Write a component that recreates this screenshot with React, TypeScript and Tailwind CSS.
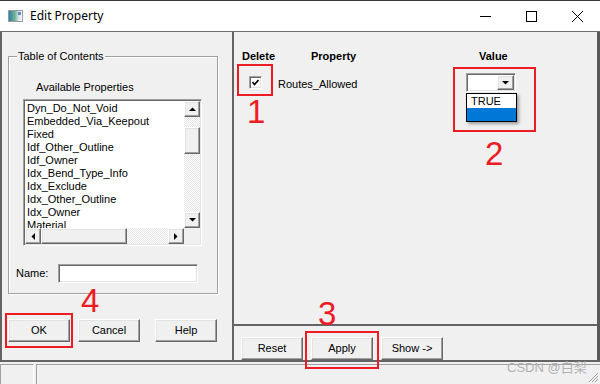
import React from "react";

const raised =
  "bg-[#f0f0f0] border border-t-white border-l-white border-r-[#696969] border-b-[#696969] shadow-[inset_-1px_-1px_0_#a0a0a0,inset_1px_1px_0_#e3e3e3]";
const sunken =
  "bg-white border border-t-[#a0a0a0] border-l-[#a0a0a0] border-r-white border-b-white shadow-[inset_1px_1px_0_#696969,inset_-1px_-1px_0_#e3e3e3]";
const btn =
  "h-[23px] w-[62px] flex items-center justify-center text-[11px] leading-none text-black " + raised;

const items = [
  "Dyn_Do_Not_Void",
  "Embedded_Via_Keepout",
  "Fixed",
  "Idf_Other_Outline",
  "Idf_Owner",
  "Idx_Bend_Type_Info",
  "Idx_Exclude",
  "Idx_Other_Outline",
  "Idx_Owner",
  "Material",
];

function Tri({ dir }: { dir: "up" | "down" | "left" | "right" }) {
  const pts =
    dir === "up"
      ? "0,4 7,4 3.5,0.5"
      : dir === "down"
      ? "0,0 7,0 3.5,3.5"
      : dir === "left"
      ? "4,0 4,7 0.5,3.5"
      : "0,0 0,7 3.5,3.5";
  const w = dir === "up" || dir === "down" ? 7 : 4;
  const h = dir === "up" || dir === "down" ? 4 : 7;
  return (
    <svg width={w} height={h} viewBox={`0 0 ${w} ${h}`}>
      <polygon points={pts} fill="#000" />
    </svg>
  );
}

const track =
  "bg-[repeating-conic-gradient(#e4e4e4_0_25%,#ffffff_0_50%)] bg-[length:2px_2px]";

export default function App() {
  return (
    <div className="relative w-[600px] h-[384px] overflow-hidden bg-[#f0f0f0] flex flex-col text-black font-['Liberation_Sans',Arial,sans-serif]">
      {/* Title bar */}
      <div className="h-[32px] shrink-0 bg-white border-t border-t-[#3a3a3a] border-b border-b-[#6e6e6e] flex items-center">
        <div className="ml-[8px] w-[15px] h-[12px] border border-[#9a9a9a] bg-[linear-gradient(90deg,#2f7fb5_0%,#6fb38a_45%,#c9d9e4_70%,#ffffff_100%)] flex">
          <div className="ml-[9px] mt-[1px] w-[3px] h-[3px] bg-[#5c8fb5]" />
        </div>
        <span className="ml-[7px] text-[12px] text-black font-['Noto_Sans',sans-serif]">
          Edit Property
        </span>
        <div className="ml-auto flex items-center h-full">
          <div className="w-[46px] h-full flex items-center justify-center">
            <svg width="11" height="11" viewBox="0 0 11 11">
              <line x1="0" y1="5.5" x2="11" y2="5.5" stroke="#000" strokeWidth="1" />
            </svg>
          </div>
          <div className="w-[46px] h-full flex items-center justify-center">
            <svg width="11" height="11" viewBox="0 0 11 11">
              <rect x="0.5" y="0.5" width="10" height="10" fill="none" stroke="#000" strokeWidth="1" />
            </svg>
          </div>
          <div className="w-[46px] h-full flex items-center justify-center">
            <svg width="11" height="11" viewBox="0 0 11 11">
              <line x1="0" y1="0" x2="11" y2="11" stroke="#000" strokeWidth="1" />
              <line x1="11" y1="0" x2="0" y2="11" stroke="#000" strokeWidth="1" />
            </svg>
          </div>
        </div>
      </div>

      {/* Body */}
      <div className="h-[330px] shrink-0 flex border-b-2 border-b-[#646464]">
        {/* Left panel */}
        <div className="w-[234px] shrink-0 border-l-2 border-l-[#646464] border-r-2 border-r-[#646464] flex flex-col">
          {/* Group box */}
          <div className="relative ml-[6px] mt-[24px] w-[210px] h-[238px] border border-[#a0a0a0] shadow-[inset_1px_1px_0_#ffffff,1px_1px_0_#ffffff] flex flex-col">
            <span className="absolute left-[8px] top-[-7px] px-[1px] bg-[#f0f0f0] text-[11px] leading-[13px]">
              Table of Contents
            </span>
            <div className="mt-[24px] ml-[27px] text-[11px] leading-[13px]">Available Properties</div>
            {/* Listbox */}
            <div className={"ml-[14px] mt-[5px] w-[179px] h-[147px] p-[1px] flex flex-col " + sunken}>
              <div className="flex h-[127px]">
                <div className="flex-1 overflow-hidden pl-[2px] pt-[1px]">
                  {items.map((t) => (
                    <div key={t} className="text-[11px] leading-[13px] whitespace-nowrap">
                      {t}
                    </div>
                  ))}
                </div>
                <div className={"w-[16px] flex flex-col " + track}>
                  <div className={"h-[16px] flex items-center justify-center " + raised}>
                    <Tri dir="up" />
                  </div>
                  <div className="h-[10px]" />
                  <div className={"h-[27px] " + raised} />
                  <div className="flex-1" />
                  <div className={"h-[16px] flex items-center justify-center " + raised}>
                    <Tri dir="down" />
                  </div>
                </div>
              </div>
              <div className="flex h-[16px]">
                <div className={"flex-1 flex " + track}>
                  <div className={"w-[16px] flex items-center justify-center " + raised}>
                    <Tri dir="left" />
                  </div>
                  <div className={"w-[86px] " + raised} />
                  <div className="flex-1" />
                  <div className={"w-[16px] flex items-center justify-center " + raised}>
                    <Tri dir="right" />
                  </div>
                </div>
                <div className="w-[16px] bg-[#f0f0f0]" />
              </div>
            </div>
            {/* Name row */}
            <div className="mt-[18px] ml-[7px] flex items-center">
              <span className="w-[42px] text-[11px] leading-[13px]">Name:</span>
              <div className={"w-[140px] h-[19px] " + sunken} />
            </div>
          </div>
          {/* Buttons */}
          <div className="mt-[25px] flex">
            <div className={"ml-[6px] " + btn + " border-[#404040] shadow-[inset_-1px_-1px_0_#696969,inset_1px_1px_0_#ffffff]"}>OK</div>
            <div className={"ml-[8px] " + btn}>Cancel</div>
            <div className={"ml-[15px] " + btn}>Help</div>
          </div>
        </div>

        {/* Right panel */}
        <div className="flex-1 flex flex-col border-r-[3px] border-r-[#5a5a5a]">
          <div className="h-[294px] shrink-0 border-b-2 border-b-[#646464] flex flex-col">
            <div className="mt-[18px] flex text-[11px] leading-[13px] font-bold">
              <span className="ml-[8px] w-[69px]">Delete</span>
              <span className="w-[168px]">Property</span>
              <span>Value</span>
            </div>
            <div className="mt-[10px] flex">
              <div className={"ml-[15px] mt-[3px] w-[13px] h-[13px] flex items-center justify-center " + sunken}>
                <svg width="7" height="7" viewBox="0 0 7 7">
                  <polyline points="0.5,3 2.5,5.5 6.5,1" fill="none" stroke="#000" strokeWidth="1.6" />
                </svg>
              </div>
              <span className="ml-[16px] mt-[5px] w-[188px] text-[11px] leading-[13px]">Routes_Allowed</span>
              <div className={"w-[50px] h-[19px] flex justify-end p-[1px] " + sunken}>
                <div className={"w-[17px] h-full flex items-center justify-center " + raised}>
                  <Tri dir="down" />
                </div>
              </div>
            </div>
          </div>
          <div className="flex-1 flex pt-[11px] pl-[7px] gap-[8px]">
            <div className={btn}>Reset</div>
            <div className={btn}>Apply</div>
            <div className={btn}>Show -&gt;</div>
          </div>
        </div>
      </div>

      {/* Status bar */}
      <div className="flex-1 flex pt-[2px]">
        <div className="w-[34px] border-t border-l border-t-[#a0a0a0] border-l-[#a0a0a0] border-r border-r-white" />
        <div className="ml-[2px] flex-1 border-t border-l border-t-[#a0a0a0] border-l-[#a0a0a0]" />
      </div>

      {/* Resize grip */}
      <svg className="absolute right-[1px] bottom-[1px]" width="12" height="12" viewBox="0 0 12 12">
        <line x1="11" y1="2" x2="2" y2="11" stroke="#a0a0a0" />
        <line x1="11" y1="5" x2="5" y2="11" stroke="#a0a0a0" />
        <line x1="11" y1="8" x2="8" y2="11" stroke="#a0a0a0" />
      </svg>

      {/* Dropdown list overlay */}
      <div className="absolute left-[466px] top-[93px] w-[51px] h-[29px] bg-white border border-black shadow-[2px_2px_3px_rgba(0,0,0,0.35)] flex flex-col">
        <div className="h-[14px] pl-[4px] text-[11px] leading-[14px]">TRUE</div>
        <div className="flex-1 bg-[#0078d7]" />
      </div>

      {/* Annotation boxes */}
      <div className="absolute left-[237px] top-[64px] w-[36px] h-[32px] border-2 border-[#ed1c24]" />
      <div className="absolute left-[453px] top-[67px] w-[83px] h-[65px] border-2 border-[#ed1c24]" />
      <div className="absolute left-[305px] top-[331px] w-[74px] h-[38px] border-2 border-[#ed1c24]" />
      <div className="absolute left-[5px] top-[313px] w-[68px] h-[35px] border-2 border-[#ed1c24]" />

      {/* Annotation numbers */}
      <span className="absolute left-[247px] top-[95px] text-[33px] leading-[33px] text-[#ed1c24]">1</span>
      <span className="absolute left-[485px] top-[137px] text-[33px] leading-[33px] text-[#ed1c24]">2</span>
      <span className="absolute left-[318px] top-[297px] text-[33px] leading-[33px] text-[#ed1c24]">3</span>
      <span className="absolute left-[81px] top-[284px] text-[33px] leading-[33px] text-[#ed1c24]">4</span>

      {/* Watermark */}
      <span className="absolute left-[507px] top-[360px] text-[13px] leading-[16px] text-[#b0b0b0] font-['Liberation_Sans','Noto_Sans_CJK_SC',sans-serif]">
        CSDN @白梨
      </span>
    </div>
  );
}
